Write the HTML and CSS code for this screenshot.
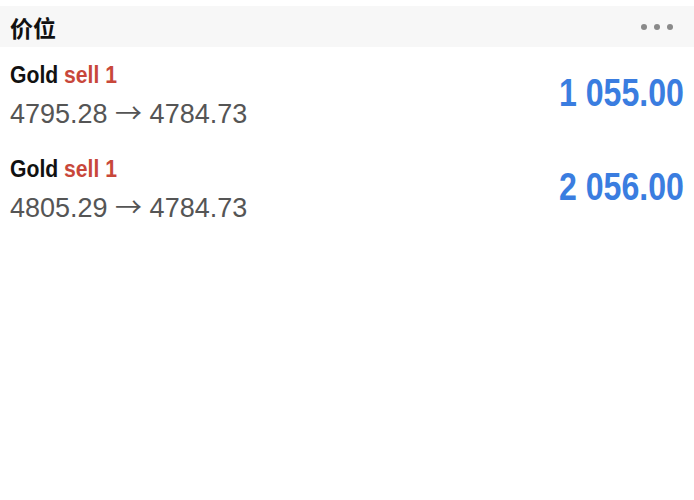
FILE: index.html
```html
<!DOCTYPE html>
<html lang="zh">
<head>
    <meta charset="UTF-8">
    <title>价位</title>
    <link rel="stylesheet" href="styles.css">
</head>
<body>
    <div class="panel">
        <div class="panel-header">
            <div class="panel-title">价位</div>
            <div class="more">
                <span class="dot"></span>
                <span class="dot"></span>
                <span class="dot"></span>
            </div>
        </div>
        <div class="list">
            <div class="row">
                <div class="info">
                    <div class="name"><span>Gold <span class="side">sell 1</span></span></div>
                    <div class="prices">4795.28 <span class="arrow">→</span> 4784.73</div>
                </div>
                <div class="value"><span>1 055.00</span></div>
            </div>
            <div class="row">
                <div class="info">
                    <div class="name"><span>Gold <span class="side">sell 1</span></span></div>
                    <div class="prices">4805.29 <span class="arrow">→</span> 4784.73</div>
                </div>
                <div class="value"><span>2 056.00</span></div>
            </div>
        </div>
    </div>
</body>
</html>
```

FILE: styles.css
```css
body {
    margin: 0;
    background: #fff;
    font-family: 'Liberation Sans', Arial, sans-serif;
}
.panel {
    padding-top: 6px;
}
.panel-header {
    display: flex;
    justify-content: space-between;
    align-items: center;
    height: 41px;
    padding: 0 21px 0 10px;
    background-color: #f7f7f7;
}
.panel-title {
    font-family: 'Noto Sans CJK SC', sans-serif;
    font-size: 23px;
    font-weight: bold;
    color: #111;
}
.more {
    display: flex;
    gap: 7px;
}
.dot {
    width: 6px;
    height: 6px;
    border-radius: 50%;
    background-color: #8a8a8a;
}
.list {
    display: flex;
    flex-direction: column;
    gap: 21px;
    padding: 14px 10px 0 10px;
}
.row {
    display: flex;
    justify-content: space-between;
    align-items: flex-start;
}
.name {
    font-weight: bold;
    font-size: 23px;
    line-height: 28px;
    color: #111;
}
.name > span {
    display: inline-block;
    transform: scaleX(0.92);
    transform-origin: left center;
}
.side {
    color: #c8473a;
}
.prices {
    margin-top: 3px;
    font-size: 27px;
    line-height: 40px;
    color: #555;
}
.arrow {
    font-family: 'Noto Sans CJK SC', sans-serif;
}
.value {
    margin-top: 13px;
    font-weight: bold;
    font-size: 38px;
    line-height: 38px;
    color: #3a7de0;
}
.value span {
    display: inline-block;
    transform: scaleX(0.845);
    transform-origin: right center;
}
```
